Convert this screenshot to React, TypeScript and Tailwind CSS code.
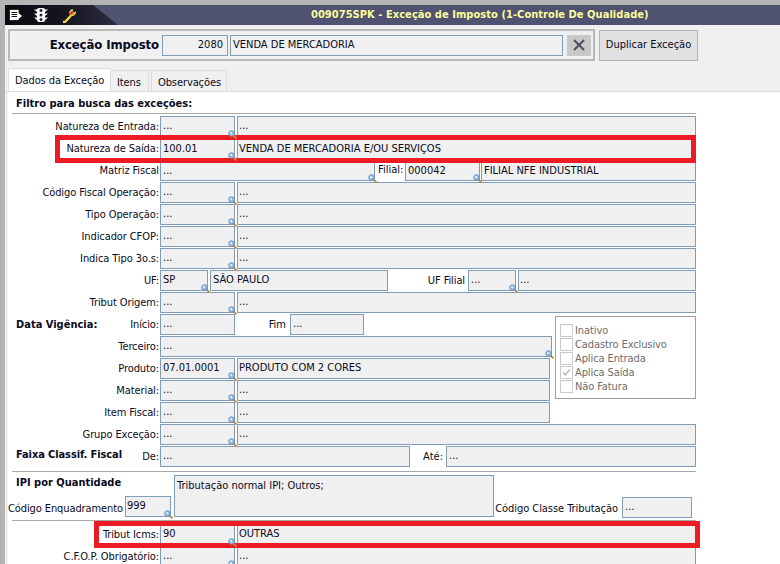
import type { ReactNode } from "react";

function Lookup() {
  return (
    <svg className="absolute right-[-3px] bottom-[-3px] z-10" width="9" height="9" viewBox="0 0 9 9">
      <path d="M4.5 4.5L8.5 8.5" stroke="#b98a3c" strokeWidth="1.8" />
      <circle cx="3.5" cy="3.5" r="2.8" fill="#9cc0e8" stroke="#5b88bb" strokeWidth="0.8" />
      <circle cx="3" cy="3" r="1.1" fill="#e4effa" />
    </svg>
  );
}

function Field({ w, value = "...", lookup, className = "pl-[2px]" }: { w: string; value?: string; lookup?: boolean; className?: string }) {
  return (
    <div className={`relative h-[21px] shrink-0 border border-[#7f9db9] bg-[#f0f0f0] leading-[18px] whitespace-nowrap ${w} ${className}`}>
      {value}
      {lookup && <Lookup />}
    </div>
  );
}

function Row({ label, children }: { label?: ReactNode; children: ReactNode }) {
  return (
    <div className="flex h-[22px] items-start">
      <div className="h-[21px] w-[158px] shrink-0 pr-[1px] text-right leading-[21px] tracking-[-0.1px] whitespace-nowrap">{label}</div>
      {children}
    </div>
  );
}

// most rows: short code on the left, description on the right
function CodeRow({ label, code = "...", desc = "...", descW = "w-[459px]" }: { label: string; code?: string; desc?: string; descW?: string }) {
  return (
    <Row label={label}>
      <Field w="w-[75px]" value={code} lookup />
      <Field w={descW} value={desc} className="ml-[2px] pl-[1px]" />
    </Row>
  );
}

function Check({ label, checked }: { label: string; checked?: boolean }) {
  return (
    <div className="flex h-[14px] items-center gap-[2px] text-[#6d6d6d]">
      <div className="relative h-[13px] w-[13px] border border-[#c9c9c9] bg-white">
        {checked && (
          <svg className="absolute left-0 top-0" width="11" height="11" viewBox="0 0 11 11">
            <path d="M2 5.5L4.3 8L9 2.5" fill="none" stroke="#b5b5b5" strokeWidth="1.3" />
          </svg>
        )}
      </div>
      <span className="mt-[2px] tracking-[-0.1px]">{label}</span>
    </div>
  );
}

export default function App() {
  return (
    <div className="relative h-[564px] w-[780px] overflow-hidden bg-[#b4b4b4] pt-[5px] pl-[5px] font-['DejaVu_Sans_Condensed','DejaVu_Sans',sans-serif] text-[11px] text-[#0a0a20]">
      {/* title bar */}
      <div className="relative flex h-[20px] items-center bg-[#4f5270]">
        <div className="absolute inset-y-0 left-0 w-[113px] bg-gradient-to-r from-[#08080f] via-[#15151f] to-[#2c2d40] [clip-path:polygon(0_0,78%_0,100%_100%,0_100%)]" />
        <div className="relative flex items-center">
          <svg className="ml-[4px]" width="14" height="14" viewBox="0 0 14 14">
            <path d="M0.5 1.5H10V5L13.5 8L10 11V12.5H0.5Z" fill="#fff" stroke="#111" strokeWidth="0.8" />
            <path d="M2.5 4.5H8M2.5 6.5H8M2.5 8.5H8" stroke="#111" strokeWidth="1" />
          </svg>
          <svg className="ml-[10px]" width="16" height="16" viewBox="0 0 16 16">
            <rect x="4" y="1" width="8" height="14" rx="2" fill="#fff" />
            <path d="M1 2.5L4 5V2.5ZM15 2.5L12 5V2.5ZM1 6.5L4 9V6.5ZM15 6.5L12 9V6.5ZM1 10.5L4 13V10.5ZM15 10.5L12 13V10.5Z" fill="#fff" />
            <circle cx="8" cy="3.5" r="1.5" fill="#222" />
            <circle cx="8" cy="8" r="1.5" fill="#222" />
            <circle cx="8" cy="12.5" r="1.5" fill="#222" />
          </svg>
          <svg className="ml-[13px]" width="15" height="15" viewBox="0 0 15 15">
            <path d="M1 14L3 14L9 7.5" fill="none" stroke="#f4d23c" strokeWidth="2.4" />
            <path d="M7 5C8 2 9 1 11 1L10.5 3.5L12.5 4.5L14 3C14.5 6 12 8.5 9 8Z" fill="#f4d23c" />
            <circle cx="9.5" cy="5" r="1.6" fill="#e3202a" />
          </svg>
        </div>
        <div className="absolute left-[306px] font-bold tracking-[0.05px] whitespace-nowrap text-[#fdfd9c]">009075SPK - Exceção de Imposto (1-Controle De Qualidade)</div>
      </div>

      {/* header */}
      <div className="h-[67px] bg-[#f0f0f0] pt-[4px] pl-[3px]">
        <div className="flex items-start">
          <div className="flex h-[32px] w-[587px] items-center border-2 border-[#b9b9b9] pl-[4px]">
            <div className="w-[148px] pr-[3px] text-right text-[13px] font-bold tracking-[-0.1px] whitespace-nowrap">Exceção Imposto</div>
            <div className="h-[21px] w-[66px] border border-[#7f9db9] pr-[4px] text-right leading-[17px]">2080</div>
            <div className="ml-[2px] h-[21px] w-[333px] border border-[#7f9db9] pl-[2px] leading-[17px]">VENDA DE MERCADORIA</div>
            <div className="ml-[4px] flex h-[21px] w-[24px] items-center justify-center bg-[#c8c8c8]">
              <svg width="12" height="12" viewBox="0 0 12 12">
                <path d="M1 1L11 11M11 1L1 11" stroke="#4a4f58" strokeWidth="2" />
              </svg>
            </div>
          </div>
          <div className="ml-[4px] mt-[1px] flex h-[31px] w-[99px] items-center justify-center border border-[#b4b4b4] bg-[#e1e1e1]">Duplicar Exceção</div>
        </div>
      </div>

      {/* tabs */}
      <div className="mt-[-23px] flex h-[23px] items-end border-b border-[#dcdcdc] pl-[3px] tracking-[-0.1px]">
        <div className="h-[23px] w-[103px] border border-b-0 border-[#dcdcdc] bg-white pt-[4px] pl-[6px]">Dados da Exceção</div>
        <div className="ml-[1px] h-[21px] w-[37px] border-y border-r border-b-0 border-[#dcdcdc] pt-[4px] pl-[5px]">Itens</div>
        <div className="ml-[2px] h-[21px] w-[76px] border border-b-0 border-[#dcdcdc] pt-[4px] pl-[6px]">Observações</div>
      </div>

      {/* form */}
      <div className="relative h-[472px] border-l-[3px] border-[#f0f0f0] bg-white">
        <div className="h-[21px] pt-[5px] pl-[8px] font-bold leading-[14px]">Filtro para busca das exceções:</div>
        <div className="ml-[4px] h-[1px] w-[684px] bg-[#a8a8a8]" />
        <div className="mt-[2px] ml-[-6px]">
          <CodeRow label="Natureza de Entrada:" />
          <Row label="Natureza de Saída:">
            <Field w="w-[75px]" value="100.01" lookup className="pt-[1px] pl-[2px]" />
            <Field w="w-[459px]" value="VENDA DE MERCADORIA E/OU SERVIÇOS" className="ml-[2px] pt-[1px] pl-[1px]" />
          </Row>
          <Row label="Matriz Fiscal">
            <Field w="w-[215px]" lookup className="pt-[1px] pl-[2px]" />
            <div className="h-[21px] w-[30px] pt-[1px] pl-[3px] leading-[17px]">Filial:</div>
            <Field w="w-[75px]" value="000042" lookup className="pt-[1px] pl-[2px]" />
            <Field w="w-[215px]" value="FILIAL NFE INDUSTRIAL" className="ml-[1px] pt-[1px] pl-[2px]" />
          </Row>
          <CodeRow label="Código Fiscal Operação:" />
          <CodeRow label="Tipo Operação:" />
          <CodeRow label="Indicador CFOP:" />
          <CodeRow label="Indica Tipo 3o.s:" />
          <Row label="UF:">
            <Field w="w-[48px]" value="SP" lookup />
            <Field w="w-[178px]" value="SÃO PAULO" className="ml-[2px] pl-[2px]" />
            <div className="h-[21px] w-[80px] pr-[3px] text-right leading-[21px] tracking-[-0.1px]">UF Filial</div>
            <Field w="w-[48px]" lookup />
            <Field w="w-[178px]" className="ml-[2px] pl-[1px]" />
          </Row>
          <CodeRow label="Tribut Origem:" />
          <div className="relative">
            <div className="absolute top-0 left-[14px] font-bold leading-[21px]">Data Vigência:</div>
            <Row label="Início:">
              <Field w="w-[75px]" />
              <div className="h-[21px] w-[55px] pr-[4px] text-right leading-[21px]">Fim</div>
              <Field w="w-[74px]" />
            </Row>
            <Row label="Terceiro:">
              <Field w="w-[392px]" lookup />
            </Row>
            <CodeRow label="Produto:" code="07.01.0001" desc="PRODUTO COM 2 CORES" descW="w-[313px]" />
            <CodeRow label="Material:" descW="w-[313px]" />
            <CodeRow label="Item Fiscal:" descW="w-[313px]" />
            {/* options box */}
            <div className="absolute top-[2px] left-[553px] h-[83px] w-[141px] border border-[#a0a0a0] bg-white pt-[6px] pl-[4px]">
              <Check label="Inativo" />
              <Check label="Cadastro Exclusivo" />
              <Check label="Aplica Entrada" />
              <Check label="Aplica Saída" checked />
              <Check label="Não Fatura" />
            </div>
          </div>
          <CodeRow label="Grupo Exceção:" />
          <div className="relative">
            <div className="absolute top-0 left-[14px] font-bold tracking-[-0.1px] leading-[18px]">Faixa Classif. Fiscal</div>
            <Row label="De:">
              <Field w="w-[250px]" />
              <div className="h-[21px] w-[36px] pr-[3px] text-right leading-[21px]">Até:</div>
              <Field w="w-[250px]" />
            </Row>
          </div>
        </div>
        <div className="mt-[3px] ml-[4px] h-[1px] w-[684px] bg-[#a8a8a8]" />

        {/* IPI section */}
        <div className="flex h-[48px] items-start">
          <div className="mt-[2px] w-[163px] shrink-0">
            <div className="pl-[8px] font-bold leading-[18px]">IPI por Quantidade</div>
            <div className="mt-[4px] flex">
              <div className="w-[112px] shrink-0 pt-[5px] text-right leading-[16px] tracking-[-0.1px] whitespace-nowrap">Código Enquadramento</div>
              <Field w="w-[46px]" value="999" lookup className="ml-[5px] pl-[1px]" />
            </div>
          </div>
          <div className="mt-[3px] ml-[3px] h-[42px] w-[320px] border border-[#7f9db9] bg-[#f0f0f0] pt-[2px] pl-[2px]">Tributação normal IPI; Outros;</div>
          <div className="mt-[29px] w-[124px] shrink-0 text-right leading-[16px] tracking-[-0.05px] whitespace-nowrap">Código Classe Tributação</div>
          <Field w="w-[70px]" className="mt-[25px] ml-[4px] pl-[2px]" />
        </div>
        <div className="ml-[4px] h-[1px] w-[684px] bg-[#a8a8a8]" />
        <div className="mt-[3px] ml-[-6px]">
          <CodeRow label="Tribut Icms:" code="90" desc="OUTRAS" />
          <CodeRow label="C.F.O.P. Obrigatório:" />
        </div>
      </div>

      {/* highlight boxes */}
      <div className="absolute top-[135px] left-[55px] h-[28px] w-[641px] border-[5px] border-[#ed1c24]" />
      <div className="absolute top-[521px] left-[94px] h-[27px] w-[606px] border-[5px] border-[#ed1c24]" />
    </div>
  );
}
